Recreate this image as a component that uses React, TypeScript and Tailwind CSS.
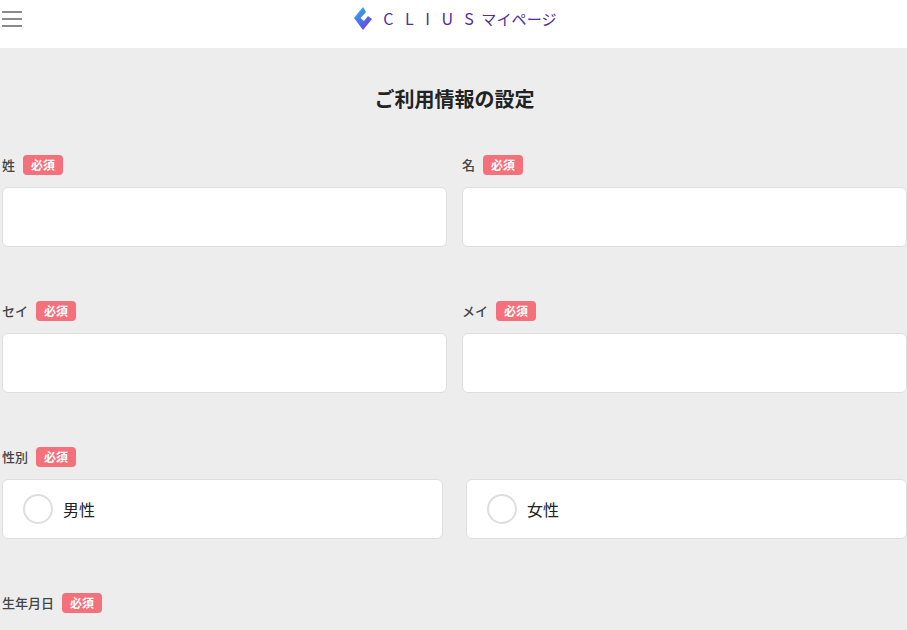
import React from 'react';

const FONT = "font-['Noto_Sans_CJK_JP','Noto_Sans',sans-serif]";

const Badge: React.FC = () => (
  <span className="flex h-5 w-10 items-center justify-center rounded-[4px] bg-[#f4707b] text-xs font-bold text-white">
    必須
  </span>
);

const FieldLabel: React.FC<{ label: string }> = ({ label }) => (
  <div className="flex h-5 items-center gap-2">
    <span className="text-[13px] font-medium text-[#444]">{label}</span>
    <Badge />
  </div>
);

const TextField: React.FC<{ label: string }> = ({ label }) => (
  <div className="w-[445px]">
    <FieldLabel label={label} />
    <input
      type="text"
      aria-label={label}
      className="mt-3 block h-[60px] w-full rounded-md border border-[#dedede] bg-white"
    />
  </div>
);

const GenderOption: React.FC<{ label: string }> = ({ label }) => (
  <label className="flex h-[60px] w-[441px] items-center gap-[10px] rounded-md border border-[#dedede] bg-white pl-5">
    <span className="h-[30px] w-[30px] rounded-full border-2 border-[#dedede] bg-white" />
    <span className="text-base text-[#222]">{label}</span>
  </label>
);

const Logo: React.FC = () => (
  <div className="flex items-center">
    <svg width="20" height="24" viewBox="0 0 20 24" className="mr-[10px]">
      <defs>
        <linearGradient id="logoBottom" x1="0.1" y1="0.2" x2="0.7" y2="1">
          <stop offset="0" stopColor="#2fa4f2" />
          <stop offset="1" stopColor="#6f3de0" />
        </linearGradient>
      </defs>
      <path d="M10 1 L13 6 L7.5 12 L11 15 L15 10 L19 13 L10 24 L1 12 Z" fill="url(#logoBottom)" />
    </svg>
    <span className="w-[98px] text-base leading-none font-normal tracking-[0.72em] text-[#4f2da0]">CLIUS</span>
    <span className="text-[15px] leading-none tracking-[0.01em] text-[#4f2da0]">マイページ</span>
  </div>
);

export default function App() {
  return (
    <div className={`h-[630px] overflow-hidden bg-[#ededed] ${FONT}`}>
      {/* ヘッダー */}
      <header className="relative flex h-12 justify-center bg-white pt-[6px] pl-[3px]">
        <button aria-label="menu" className="absolute top-[11px] left-[2px] flex w-5 flex-col gap-[5px]">
          <span className="h-0.5 w-5 bg-[#8a8a8a]" />
          <span className="h-0.5 w-5 bg-[#8a8a8a]" />
          <span className="h-0.5 w-5 bg-[#8a8a8a]" />
        </button>
        <div className="h-6">
          <Logo />
        </div>
      </header>

      <main className="pl-[2px]">
        <h1 className="mt-9 text-center text-xl leading-[30px] font-bold text-[#222]">ご利用情報の設定</h1>

        <div className="mt-[41px] flex flex-col gap-[54px]">
          <div className="flex gap-[15px]">
            <TextField label="姓" />
            <TextField label="名" />
          </div>
          <div className="flex gap-[15px]">
            <TextField label="セイ" />
            <TextField label="メイ" />
          </div>
          <div>
            <FieldLabel label="性別" />
            <div className="mt-3 flex gap-[23px]">
              <GenderOption label="男性" />
              <GenderOption label="女性" />
            </div>
          </div>
          <FieldLabel label="生年月日" />
        </div>
      </main>
    </div>
  );
}
